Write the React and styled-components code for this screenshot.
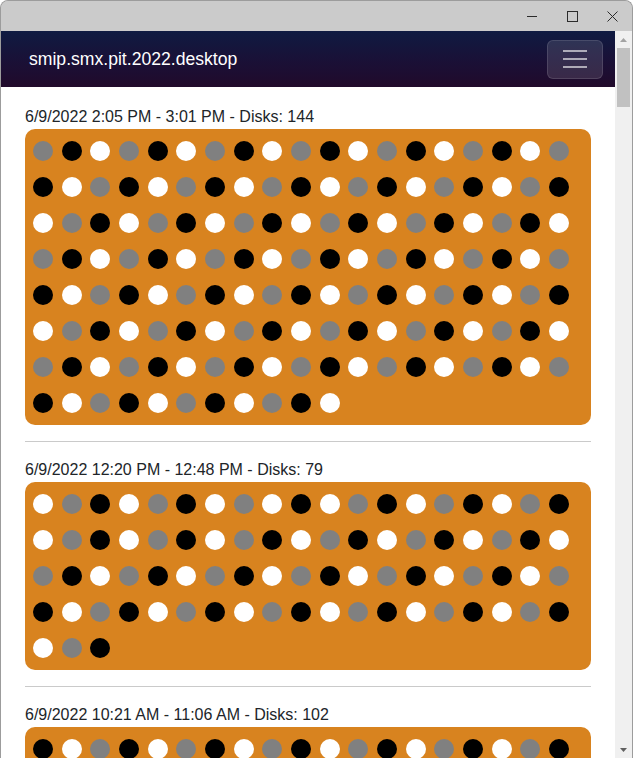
import React from 'react';
import styled, { createGlobalStyle } from 'styled-components';

const GlobalStyle = createGlobalStyle`
  html, body {
    margin: 0;
    padding: 0;
    background: #ffffff;
    font-family: "Liberation Sans", Arial, sans-serif;
  }
  * { box-sizing: border-box; }
`;

const Window = styled.div`
  width: 633px;
  height: 758px;
  display: flex;
  flex-direction: column;
  border: 1px solid #9c9c9c;
  border-bottom: none;
  border-radius: 8px 8px 0 0;
  overflow: hidden;
  background: #cccccc;
`;

const TitleBar = styled.div`
  height: 30px;
  flex: none;
  display: flex;
  justify-content: flex-end;
  background: #cbcbcb;
`;

const WinButton = styled.div`
  width: 40px;
  height: 30px;
  display: flex;
  align-items: center;
  justify-content: center;
  color: #2b2b2b;
`;

const Body = styled.div`
  flex: 1;
  min-height: 0;
  display: flex;
`;

const Page = styled.div`
  flex: 1;
  min-width: 0;
  overflow: hidden;
  background: #ffffff;
`;

const Navbar = styled.nav`
  height: 56px;
  display: flex;
  align-items: center;
  justify-content: space-between;
  padding: 0 12px 0 28px;
  background: linear-gradient(180deg, #0f1b42 0%, #1a1036 55%, #210a2b 100%);
`;

const Brand = styled.span`
  color: #ffffff;
  font-size: 17.6px;
`;

const Toggler = styled.button`
  width: 56px;
  height: 39px;
  padding: 0;
  display: flex;
  flex-direction: column;
  align-items: center;
  justify-content: center;
  gap: 6px;
  background: rgba(255, 255, 255, 0.12);
  border: 1px solid rgba(255, 255, 255, 0.12);
  border-radius: 6px;
`;

const Bar = styled.span`
  display: block;
  width: 24px;
  height: 2px;
  background: rgba(255, 255, 255, 0.6);
`;

const Content = styled.main`
  padding: 16px 24px 0;
`;

const Session = styled.section`
  padding-bottom: 16px;
  margin-bottom: 14px;
  border-bottom: 1px solid #cacaca;
`;

const Label = styled.div`
  font-size: 16px;
  line-height: 20px;
  padding-top: 4px;
  color: #212529;
  margin-bottom: 2px;
`;

const Board = styled.div`
  display: flex;
  flex-wrap: wrap;
  gap: 16px 8.67px;
  padding: 12px 8px;
  background: #d8831f;
  border-radius: 10px;
`;

const DOT_COLORS = { G: '#808080', B: '#000000', W: '#ffffff' };

const Disk = styled.span`
  width: 20px;
  height: 20px;
  border-radius: 50%;
  background: ${(p) => DOT_COLORS[p.$c]};
`;

const Scrollbar = styled.div`
  width: 17px;
  flex: none;
  display: flex;
  flex-direction: column;
  align-items: center;
  background: #f0f0f0;
`;

const Arrow = styled.div`
  height: 17px;
  display: flex;
  align-items: center;
  justify-content: center;
`;

const Thumb = styled.div`
  width: 13px;
  height: 59px;
  background: #c1c1c1;
`;

const Spacer = styled.div`
  flex: 1;
`;

const cycle = (order, n) =>
  Array.from({ length: n }, (_, i) => order[i % order.length]).join('');

const sessions = [
  { label: '6/9/2022 2:05 PM - 3:01 PM - Disks: 144', disks: cycle('GBW', 144) },
  {
    label: '6/9/2022 12:20 PM - 12:48 PM - Disks: 79',
    disks:
      'WGBWGBWGWBWGBWGBWGB' +
      'WGBWGBWGBWGBWGBWGBW' +
      'GBWGBWGBWGBWGBWGBWG' +
      'BWGBWGBWGBWGBWGBWGB' +
      'WGB',
  },
  { label: '6/9/2022 10:21 AM - 11:06 AM - Disks: 102', disks: cycle('BWG', 102) },
];

export default function App() {
  return (
    <>
      <GlobalStyle />
      <Window>
        <TitleBar>
          <WinButton>
            <svg width="10" height="10" viewBox="0 0 10 10">
              <line x1="0" y1="5.5" x2="10" y2="5.5" stroke="currentColor" strokeWidth="1" />
            </svg>
          </WinButton>
          <WinButton>
            <svg width="11" height="11" viewBox="0 0 11 11">
              <rect x="0.5" y="0.5" width="10" height="10" fill="none" stroke="currentColor" strokeWidth="1" />
            </svg>
          </WinButton>
          <WinButton>
            <svg width="11" height="11" viewBox="0 0 11 11">
              <path d="M0.5 0.5 L10.5 10.5 M10.5 0.5 L0.5 10.5" stroke="currentColor" strokeWidth="1" />
            </svg>
          </WinButton>
        </TitleBar>
        <Body>
          <Page>
            <Navbar>
              <Brand>smip.smx.pit.2022.desktop</Brand>
              <Toggler aria-label="menu">
                <Bar />
                <Bar />
                <Bar />
              </Toggler>
            </Navbar>
            <Content>
              {sessions.map((s) => (
                <Session key={s.label}>
                  <Label>{s.label}</Label>
                  <Board>
                    {s.disks.split('').map((c, i) => (
                      <Disk key={i} $c={c} />
                    ))}
                  </Board>
                </Session>
              ))}
            </Content>
          </Page>
          <Scrollbar>
            <Arrow>
              <svg width="7" height="4" viewBox="0 0 7 4">
                <path d="M0 4 L3.5 0 L7 4 Z" fill="#a3a3a3" />
              </svg>
            </Arrow>
            <Thumb />
            <Spacer />
            <Arrow>
              <svg width="7" height="4" viewBox="0 0 7 4">
                <path d="M0 0 L3.5 4 L7 0 Z" fill="#606060" />
              </svg>
            </Arrow>
          </Scrollbar>
        </Body>
      </Window>
    </>
  );
}
